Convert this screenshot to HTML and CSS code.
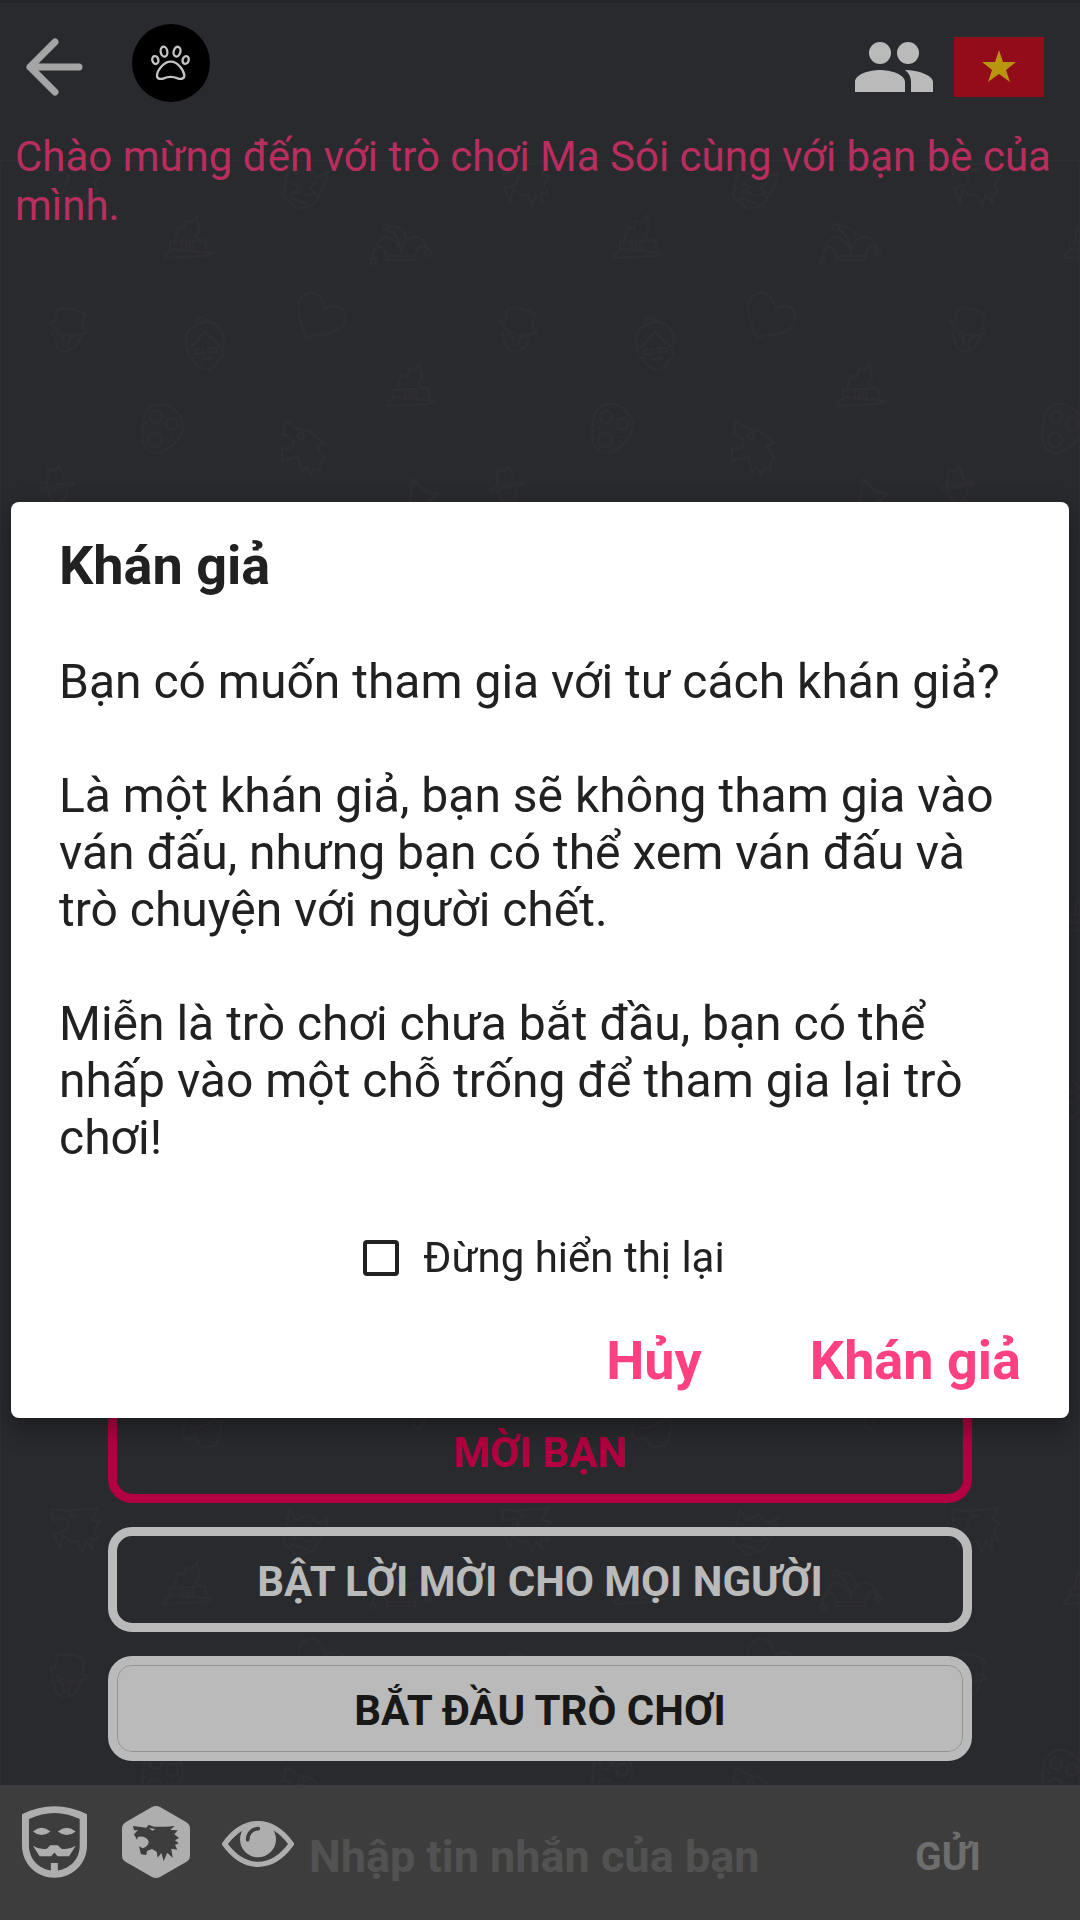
FILE: index.html
```
<!DOCTYPE html>
<html lang="vi">
<head>
    <meta charset="UTF-8">
    <meta name="viewport" content="width=device-width, initial-scale=1.0">
    <title>Ma Sói</title>
    <link rel="stylesheet" href="styles.css">
</head>
<body>
    <div class="game">
        <!-- Faint repeating wallpaper -->
        <svg class="wallpaper" aria-hidden="true">
            <defs>
                <g id="witch-hat">
                    <path d="M0 40L7 33L49 37L40 40L0 42zM6 33V26L41 24L43 35M10 26L14 11L20 13L22 5L28 6L33 0L35 15L31 20L36 24M18 25H29V35H18zM22 28H26V32H22z"/>
                </g>
                <pattern id="roles" width="450" height="673" patternUnits="userSpaceOnUse">
                    <path d="M52 3L66 5L98 2L92 14L100 16L94 24L98 34L91 33L93 44L86 35L82 46L78 35L71 36L63 29L60 42L54 28Q70 26 68 15Q62 9 53 15zM70 8L78 9L72 12z"/>
                    <path d="M286 20L290 3L296 14L308 9L318 17L328 12L325 25L313 45L297 49L283 36zM292 23L300 27L292 32L302 33M317 22L310 28L316 33L304 36M290 38L308 44"/>
                    <use href="#witch-hat" x="164" y="56"/>
                    <path d="M373 100C371 84 385 80 387 100H415C416 80 429 84 427 94M373 94C381 70 392 74 401 90C407 71 424 74 428 90M387 96H415M387 67C400 65 406 71 406 79M401 94C401 81 393 71 387 68"/>
                    <circle cx="373" cy="101" r="3"/><circle cx="428" cy="93" r="3"/><circle cx="386" cy="67" r="3"/>
                    <path d="M57 152L58 149Q70 146 85 154L82 168Q88 171 86 173Q64 181 50 163Q49 160 55 162zM52 171L57 188Q66 195 76 186L83 172M57 174L63 177L64 187M78 175L70 178L68 188"/>
                    <path d="M188 191Q181 172 195 166Q205 158 215 164Q228 173 222 191Q225 197 219 199Q213 213 204 209Q195 206 193 198Q187 198 188 191zM190 188L205 172L221 187M194 189H203V194H195zM208 188H217V192H209zM202 200Q208 197 213 199M194 164Q198 152 210 163"/>
                    <path d="M306 179C300 159 291 139 308 133Q322 131 325 149C342 139 352 156 340 169Q329 175 317 175Q310 176 306 179z"/>
                    <use href="#witch-hat" x="387" y="204"/>
                    <path d="M143 264C144 241 165 239 177 252C193 271 171 291 157 293C142 293 141 278 143 264z"/>
                    <circle cx="156" cy="257" r="6"/><circle cx="172" cy="264" r="6"/><circle cx="155" cy="280" r="7"/>
                    <path d="M146 262v2M149 266v2M144 270v2M167 276v2M172 276v2M169 281v2"/>
                    <path d="M286 261L298 269L309 271L324 283L317 286L325 299L321 302L320 311L314 308L311 315L307 307L302 312L298 297L282 301V288Q293 291 294 282Q289 274 283 275z"/>
                    <circle cx="301" cy="276" r="3"/>
                    <path d="M47 325L48 309L54 311L59 306L65 322M41 328L73 322V325L41 331zM48 331Q51 344 59 343Q67 339 67 328M46 350L52 342L58 348L66 341L75 349"/>
                    <path d="M409 347L413 319L425 331L438 334L429 341L439 347"/>
                    <path d="M190 582Q181 570 193 563Q206 559 208 572L222 585L220 600L216 612L202 615L195 604L185 607Q178 594 190 582zM188 584Q206 580 221 590M190 596Q209 593 217 584"/>
                    <path d="M384 571L397 565L419 569L427 582L420 597L413 592L415 586L410 582L403 580L399 573z"/>
                </pattern>
            </defs>
            <rect width="100%" height="100%" fill="url(#roles)"/>
        </svg>

        <header class="top-bar">
            <button class="icon-button back" aria-label="Quay lại">
                <svg width="58" height="58" viewBox="0 0 58 58"><path d="M29 4L4 29L29 54M4 29H53" fill="none" stroke="#a5a5a5" stroke-width="7" stroke-linecap="round" stroke-linejoin="round"/></svg>
            </button>
            <button class="icon-button paw" aria-label="Phòng">
                <svg width="40" height="36" viewBox="456 137 120 108" fill="none" stroke="#c4c4c4" stroke-width="7">
                    <path d="M515 187C496 186 474 213 474 229C474 240 486 240 494 237Q515 228 536 237C545 240 556 240 556 228C554 211 534 186 515 187z"/>
                    <ellipse cx="495" cy="157" rx="10" ry="15" transform="rotate(-10 495 157)"/>
                    <ellipse cx="534" cy="157" rx="10" ry="15" transform="rotate(15 534 157)"/>
                    <ellipse cx="469" cy="182" rx="9" ry="12" transform="rotate(-15 469 182)"/>
                    <ellipse cx="560" cy="182" rx="9" ry="12" transform="rotate(20 560 182)"/>
                </svg>
            </button>
            <button class="icon-button people" aria-label="Người chơi">
                <svg width="78" height="50" viewBox="0 0 78 50" fill="#bababa">
                    <circle cx="25" cy="11" r="11"/><circle cx="53" cy="11" r="11"/>
                    <path d="M0 50V40C0 32 15 28 25 28S50 32 50 40V50zM50 28C62 28 78 33 78 40V50H56V40C56 35 54 31 50 28z"/>
                </svg>
            </button>
            <button class="icon-button language" aria-label="Tiếng Việt">
                <svg width="90" height="60" viewBox="0 0 90 60"><path fill="#930c19" d="M0 0H90V60H0z"/><path fill="#b8960f" d="M45 13L49 25L62 25L52 33L56 45L45 37L34 45L38 33L28 25L41 25z"/></svg>
            </button>
        </header>

        <main class="chat">
            <p class="welcome">Chào mừng đến với trò chơi Ma Sói cùng với bạn bè của mình.</p>
        </main>

        <div class="game-actions">
            <button class="game-button invite">MỜI BẠN</button>
            <button class="game-button">BẬT LỜI MỜI CHO MỌI NGƯỜI</button>
            <button class="game-button start">BẮT ĐẦU TRÒ CHƠI</button>
        </div>

        <footer class="message-bar">
            <div class="tools">
                <button class="icon-button" aria-label="Vai trò">
                    <svg width="65" height="72" viewBox="66 78 196 216" fill="#aeaeae">
                        <path fill-rule="evenodd" d="M66 102Q164 54 262 102V196C262 256 214 294 164 294S66 256 66 196zM87 117V196C87 240 119 267 153 272V249H174V272C211 266 240 239 240 196V117Q164 80 87 117z"/>
                        <path d="M99 154Q125 132 152 154Q125 176 99 154zM174 154Q201 132 228 154Q201 176 174 154zM99 197Q119 210 141 206L151 196H174L185 206Q208 210 228 197L208 229H173L164 218L154 229H119z"/>
                    </svg>
                </button>
                <button class="icon-button" aria-label="Ma Sói">
                    <svg width="68" height="72" viewBox="366 78 204 216">
                        <path fill="#aeaeae" d="M456 81Q468 75 480 81L557 125Q570 133 570 145V227Q570 239 557 247L480 291Q468 297 456 291L379 247Q366 239 366 227V145Q366 133 379 125z"/>
                        <path fill="#3d3d3d" d="M399 138L439 143L446 134L462 140H498L524 138L511 150L533 151L523 163L537 174L525 181L536 190L525 195L532 209L514 206L518 234L502 218L491 243L484 219L473 233L470 215L456 207L441 213L439 225L423 223L417 199L428 205Q448 198 446 184Q439 167 414 170L411 179L402 163L414 150L402 151z"/>
                        <path fill="#aeaeae" d="M447 144L466 147L457 152z"/>
                    </svg>
                </button>
                <button class="icon-button" aria-label="Khán giả">
                    <svg width="72" height="50" viewBox="666 114 216 150">
                        <path d="M674 195Q718 134 774 134T874 195Q830 256 774 256T674 195z" fill="none" stroke="#aeaeae" stroke-width="16" stroke-linejoin="round"/>
                        <circle cx="774" cy="181" r="54" fill="#aeaeae"/>
                        <path d="M743 182C743 164 755 150 775 149" fill="none" stroke="#3d3d3d" stroke-width="11" stroke-linecap="round"/>
                    </svg>
                </button>
            </div>
            <form class="message-form">
                <input class="message-input" type="text" placeholder="Nhập tin nhắn của bạn" aria-label="Nhập tin nhắn của bạn">
                <button class="send" type="button">GỬI</button>
            </form>
        </footer>
    </div>

    <!-- Spectator dialog -->
    <div class="overlay">
        <div class="dialog" role="dialog" aria-labelledby="dialog-title">
            <h2 class="dialog-title" id="dialog-title">Khán giả</h2>
            <div class="dialog-text">
                <p>Bạn có muốn tham gia với tư cách khán giả?</p>
                <p>Là một khán giả, bạn sẽ không tham gia vào ván đấu, nhưng bạn có thể xem ván đấu và trò chuyện với người chết.</p>
                <p>Miễn là trò chơi chưa bắt đầu, bạn có thể nhấp vào một chỗ trống để tham gia lại trò chơi!</p>
            </div>
            <div class="dont-show">
                <input type="checkbox" id="dont-show">
                <label for="dont-show">Đừng hiển thị lại</label>
            </div>
            <div class="dialog-actions">
                <button>Hủy</button>
                <button>Khán giả</button>
            </div>
        </div>
    </div>
</body>
</html>
```
FILE: styles.css
```
* {
    box-sizing: border-box;
}
body {
    margin: 0;
    background: #292a2e;
    font-family: Roboto, sans-serif;
}
button {
    font-family: inherit;
    cursor: pointer;
}
p {
    margin: 0;
}
.game {
    position: relative;
    display: flex;
    flex-direction: column;
    min-height: 100vh;
    border-top: 3px solid #242529;
}
.wallpaper {
    position: absolute;
    top: 157px;
    left: 0;
    z-index: -1;
    width: 100%;
    height: calc(100% - 157px);
    fill: none;
    stroke: #2e2d31;
    stroke-width: 2;
}
.icon-button {
    display: flex;
    align-items: center;
    justify-content: center;
    padding: 0;
    border: none;
    background: none;
}

/* Top bar */
.top-bar {
    display: flex;
    align-items: center;
    height: 120px;
    padding: 0 36px 0 26px;
}
.back,
.people,
.language {
    padding-top: 8px;
}
.back {
    margin-right: 48px;
}
.paw {
    width: 78px;
    height: 78px;
    border-radius: 50%;
    background: #000;
}
.people {
    margin-left: auto;
    margin-right: 21px;
}
.chat {
    flex: 1;
}
.welcome {
    padding: 9px 15px;
    color: #b92e5e;
    font-size: 42px;
    line-height: 49px;
}

/* Game buttons */
.game-actions {
    display: flex;
    flex-direction: column;
    gap: 24px;
    width: 80%;
    margin: 0 auto 24px;
}
.game-button {
    height: 105px;
    padding: 4px 0 0;
    border: 9px solid #bababa;
    border-radius: 24px;
    background: none;
    color: #bababa;
    font-size: 42px;
    font-weight: bold;
}
.invite {
    border-color: #b30040;
    color: #b30040;
}
.start {
    background: #bababa;
    box-shadow: inset 0 0 0 1px #929292;
    color: #181818;
}

/* Message bar */
.message-bar {
    display: flex;
    align-items: flex-start;
    height: 135px;
    padding: 20px 0 0 3px;
    border-top: 1px solid #3c3f45;
    background: #3d3d3d;
}
.tools {
    display: flex;
}
.tools .icon-button {
    width: 102px;
    height: 72px;
}
.message-form {
    display: flex;
    flex: 1;
    align-items: center;
    min-width: 0;
    padding-top: 24px;
}
.message-input {
    flex: 1;
    min-width: 0;
    padding: 0;
    border: none;
    outline: none;
    background: none;
    color: #bababa;
    font-family: inherit;
    font-size: 45px;
    font-weight: bold;
}
.message-input::placeholder {
    color: #525252;
}
.send {
    flex: none;
    width: 264px;
    padding: 0;
    border: none;
    background: none;
    color: #6e6e6e;
    font-size: 39px;
    font-weight: bold;
}

/* Dialog */
.overlay {
    position: fixed;
    inset: 0;
    display: flex;
    align-items: center;
    justify-content: center;
    padding: 11px;
}
.dialog {
    width: 100%;
    padding: 33px 48px 26px;
    border-radius: 8px;
    background: #fff;
    box-shadow: 0 10px 24px rgba(0, 0, 0, 0.35);
    color: #212121;
}
.dialog-title {
    margin: 0 0 56px;
    font-size: 54px;
    line-height: 62px;
}
.dialog-text {
    display: flex;
    flex-direction: column;
    gap: 57px;
    font-size: 48px;
    line-height: 57px;
}
.dont-show {
    display: flex;
    align-items: center;
    justify-content: center;
    gap: 24px;
    margin: 67px 0 48px;
    padding-left: 8px;
    font-size: 42px;
    line-height: 49px;
}
.dont-show input {
    appearance: none;
    width: 36px;
    height: 36px;
    margin: 0;
    border: 4px solid #212121;
    border-radius: 4px;
}
.dont-show input:checked {
    background: #ff4081;
}
.dialog-actions {
    display: flex;
    justify-content: flex-end;
    gap: 108px;
}
.dialog-actions button {
    padding: 0;
    border: none;
    background: none;
    color: #ff4081;
    font-size: 54px;
    font-weight: bold;
    line-height: 62px;
}
```
